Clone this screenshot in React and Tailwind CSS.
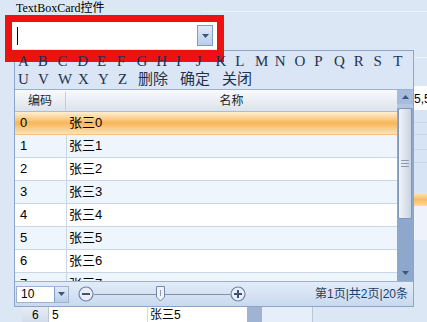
import React from 'react';

const cjk = { fontFamily: '"Liberation Sans", "Noto Sans CJK SC", sans-serif' };
const serif = { fontFamily: '"Liberation Serif", "Noto Sans CJK SC", serif' };

const rows = [0, 1, 2, 3, 4, 5, 6, 7];
const letters1 = 'ABCDEFGHIJKLMNOPQRST'.split('');
const letters2 = 'UVWXYZ'.split('');

function Triangle({ up }) {
  return (
    <svg width="7" height="4" viewBox="0 0 7 4">
      <path d={up ? 'M0 4 L3.5 0 L7 4 Z' : 'M0 0 L7 0 L3.5 4 Z'} fill="#3d5578" />
    </svg>
  );
}

function CircleBtn({ plus }) {
  return (
    <svg width="16" height="16" viewBox="0 0 16 16">
      <circle cx="8" cy="8" r="7" fill="#e9eef6" stroke="#6f84a3" strokeWidth="1.2" />
      <path d="M4 8 H12" stroke="#3f5474" strokeWidth="2" />
      {plus && <path d="M8 4 V12" stroke="#3f5474" strokeWidth="2" />}
    </svg>
  );
}

export default function App() {
  return (
    <div className="relative w-[427px] h-[322px] overflow-hidden bg-[#dce7f5] text-black">
      {/* page behind the popup */}
      <div className="flex flex-col">
        <div className="flex h-[13px]">
          <div className="pl-[16px] pt-[3px] text-[12px] leading-[11px]" style={serif}>
            TextBoxCard<span style={cjk}>控件</span>
          </div>
          <div className="ml-[96px] mt-[11px] h-px flex-1 bg-[#eef4fb]" />
        </div>
        <div className="ml-[12px] mt-[9px] flex h-[27px] w-[205px] items-center bg-white">
          <div className="ml-[5px] h-[18px] w-px bg-black" />
          <div className="ml-auto mr-[4px] flex h-[21px] w-[16px] items-center justify-center border border-[#7f9dc7] bg-gradient-to-b from-[#e1ebf8] to-[#b9cdea]">
            <Triangle />
          </div>
        </div>
        <div className="mt-[8px] flex h-[265px]">
          <div className="flex w-[262px] flex-col">
            <div className="h-[249px]" />
            <div className="ml-[22px] flex h-[16px] text-[12px]" style={cjk}>
              <div className="w-[26px] bg-gradient-to-b from-[#e8eef6] to-[#d3dcea] pl-[10px]">6</div>
              <div className="w-[99px] border-l border-[#b9c6d6] bg-white pl-[3px]">5</div>
              <div className="w-[100px] border-l border-[#d3dbe6] bg-white pl-[2px]">张三5</div>
              <div className="w-[15px] bg-[#9fb4d3]" />
            </div>
          </div>
          <div className="flex flex-1 flex-col">
            <div className="h-[29px] border-t border-[#eef4fb]" />
            <div className="h-[24px] bg-white pl-[152px] pt-[4px] text-[12px]" style={cjk}>5,5</div>
            <div className="h-[13px] border-b border-[#c8d6e8] bg-[#d6e4f6]" />
            <div className="h-[12px] border-b border-[#c8d6e8] bg-[#d6e4f6]" />
            <div className="h-[15px] border-b border-[#c8d6e8] bg-[#d6e4f6]" />
            <div className="h-[13px] border-b border-[#c8d6e8] bg-[#d6e4f6]" />
            <div className="h-[30px] bg-[#d6e4f6]" />
            <div className="h-[13px] bg-gradient-to-b from-[#fde6bd] via-[#f8bd62] to-[#fcd99c]" />
            <div className="h-[34px] bg-[#eef3fa]" />
            <div className="flex-1" />
            <div className="flex h-[16px]">
              <div className="w-[51px] border-r border-[#b5c5da] bg-[#e6eef9]" />
            </div>
          </div>
        </div>
      </div>

      {/* red annotation */}
      <div className="pointer-events-none absolute left-[5px] top-[15px] z-10 h-[47px] w-[219px] border-[7px] border-b-[12px] border-[#ee1111]" />

      {/* popup */}
      <div className="absolute left-[14px] top-[50px] flex h-[257px] w-[400px] flex-col border border-[#8ba6cc] bg-[#dae6f5]">
        <div className="relative z-20 flex h-[18px] pl-[3px] text-[15px] leading-[20px] text-[#22324d]" style={serif}>
          {letters1.map((l) => (
            <div key={l} className="w-[20px]">{l}</div>
          ))}
        </div>
        <div className="flex h-[21px] items-center border-b border-[#99b0cf] pl-[3px] text-[15px] text-[#22324d]" style={serif}>
          {letters2.map((l) => (
            <div key={l} className="w-[20px]">{l}</div>
          ))}
          <div className="flex gap-[12px]" style={cjk}>
            <span>删除</span>
            <span>确定</span>
            <span>关闭</span>
          </div>
        </div>
        <div className="flex h-[191px]">
          <div className="flex flex-1 flex-col overflow-hidden bg-white">
            <div className="flex h-[22px] shrink-0 items-center border-b border-[#aebcd0] bg-gradient-to-b from-[#f8f9fb] to-[#dde3ec] text-[12px] text-[#1e1e1e]" style={cjk}>
              <div className="w-[51px] border-r border-[#c3ccd9] text-center">编码</div>
              <div className="flex-1 text-center">名称</div>
            </div>
            {rows.map((r) => (
              <div
                key={r}
                className={`flex h-[23px] shrink-0 items-center border-b text-[13px] ${
                  r === 0
                    ? 'border-[#f3c47c] bg-gradient-to-b from-[#fff0d2] via-[#f8b657] to-[#fde2b2]'
                    : r % 2 === 1
                    ? 'border-[#c9d6e6] bg-[#eef5fd]'
                    : 'border-[#c9d6e6] bg-white'
                }`}
                style={cjk}
              >
                <div className={`flex h-full w-[52px] items-center border-r pl-[5px] ${r === 0 ? 'border-transparent' : 'border-[#c9d6e6]'}`}>{r}</div>
                <div className="pl-[2px]">张三{r}</div>
              </div>
            ))}
          </div>
          <div className="flex w-[16px] flex-col bg-[#8ea8cd]">
            <div className="flex h-[14px] items-center justify-center bg-[#a6bcdc]">
              <Triangle up />
            </div>
            <div className="h-[4px] bg-[#b4c6e0]" />
            <div className="mx-px flex h-[111px] flex-col items-center justify-center gap-[2px] rounded-[2px] border border-[#7f97ba] bg-gradient-to-r from-[#f1f4f8] to-[#c8d4e3]">
              <div className="h-px w-[8px] bg-[#8c9cb3]" />
              <div className="h-px w-[8px] bg-[#8c9cb3]" />
              <div className="h-px w-[8px] bg-[#8c9cb3]" />
            </div>
            <div className="flex flex-1 items-end justify-center pb-[6px]">
              <Triangle />
            </div>
          </div>
        </div>
        <div className="flex h-[25px] items-center border-t border-[#99b0cf] bg-gradient-to-b from-[#e3ecf8] to-[#c8d9ef] pr-[5px]">
          <div className="ml-px flex h-[17px] w-[53px] items-center border border-[#9fb3cf] bg-white">
            <span className="pl-[4px] text-[12px]" style={cjk}>10</span>
            <div className="ml-auto flex h-full w-[14px] items-center justify-center border-l border-[#7f9dc7] bg-gradient-to-b from-[#e1ebf8] to-[#b9cdea]">
              <Triangle />
            </div>
          </div>
          <div className="ml-[9px] flex items-center">
            <CircleBtn />
            <div className="relative h-px w-[136px] bg-[#7f91aa]">
              <svg className="absolute left-[62px] top-[-8px]" width="9" height="16" viewBox="0 0 9 16">
                <path d="M0.5 0.5 H8.5 V11 L4.5 15 L0.5 11 Z" fill="#eef2f7" stroke="#7189ab" />
                <path d="M4.5 4 V10" stroke="#8c9cb3" />
              </svg>
            </div>
            <CircleBtn plus />
          </div>
          <div className="ml-auto text-[12px] text-[#1f3f6e]" style={cjk}>第1页|共2页|20条</div>
        </div>
      </div>
    </div>
  );
}
